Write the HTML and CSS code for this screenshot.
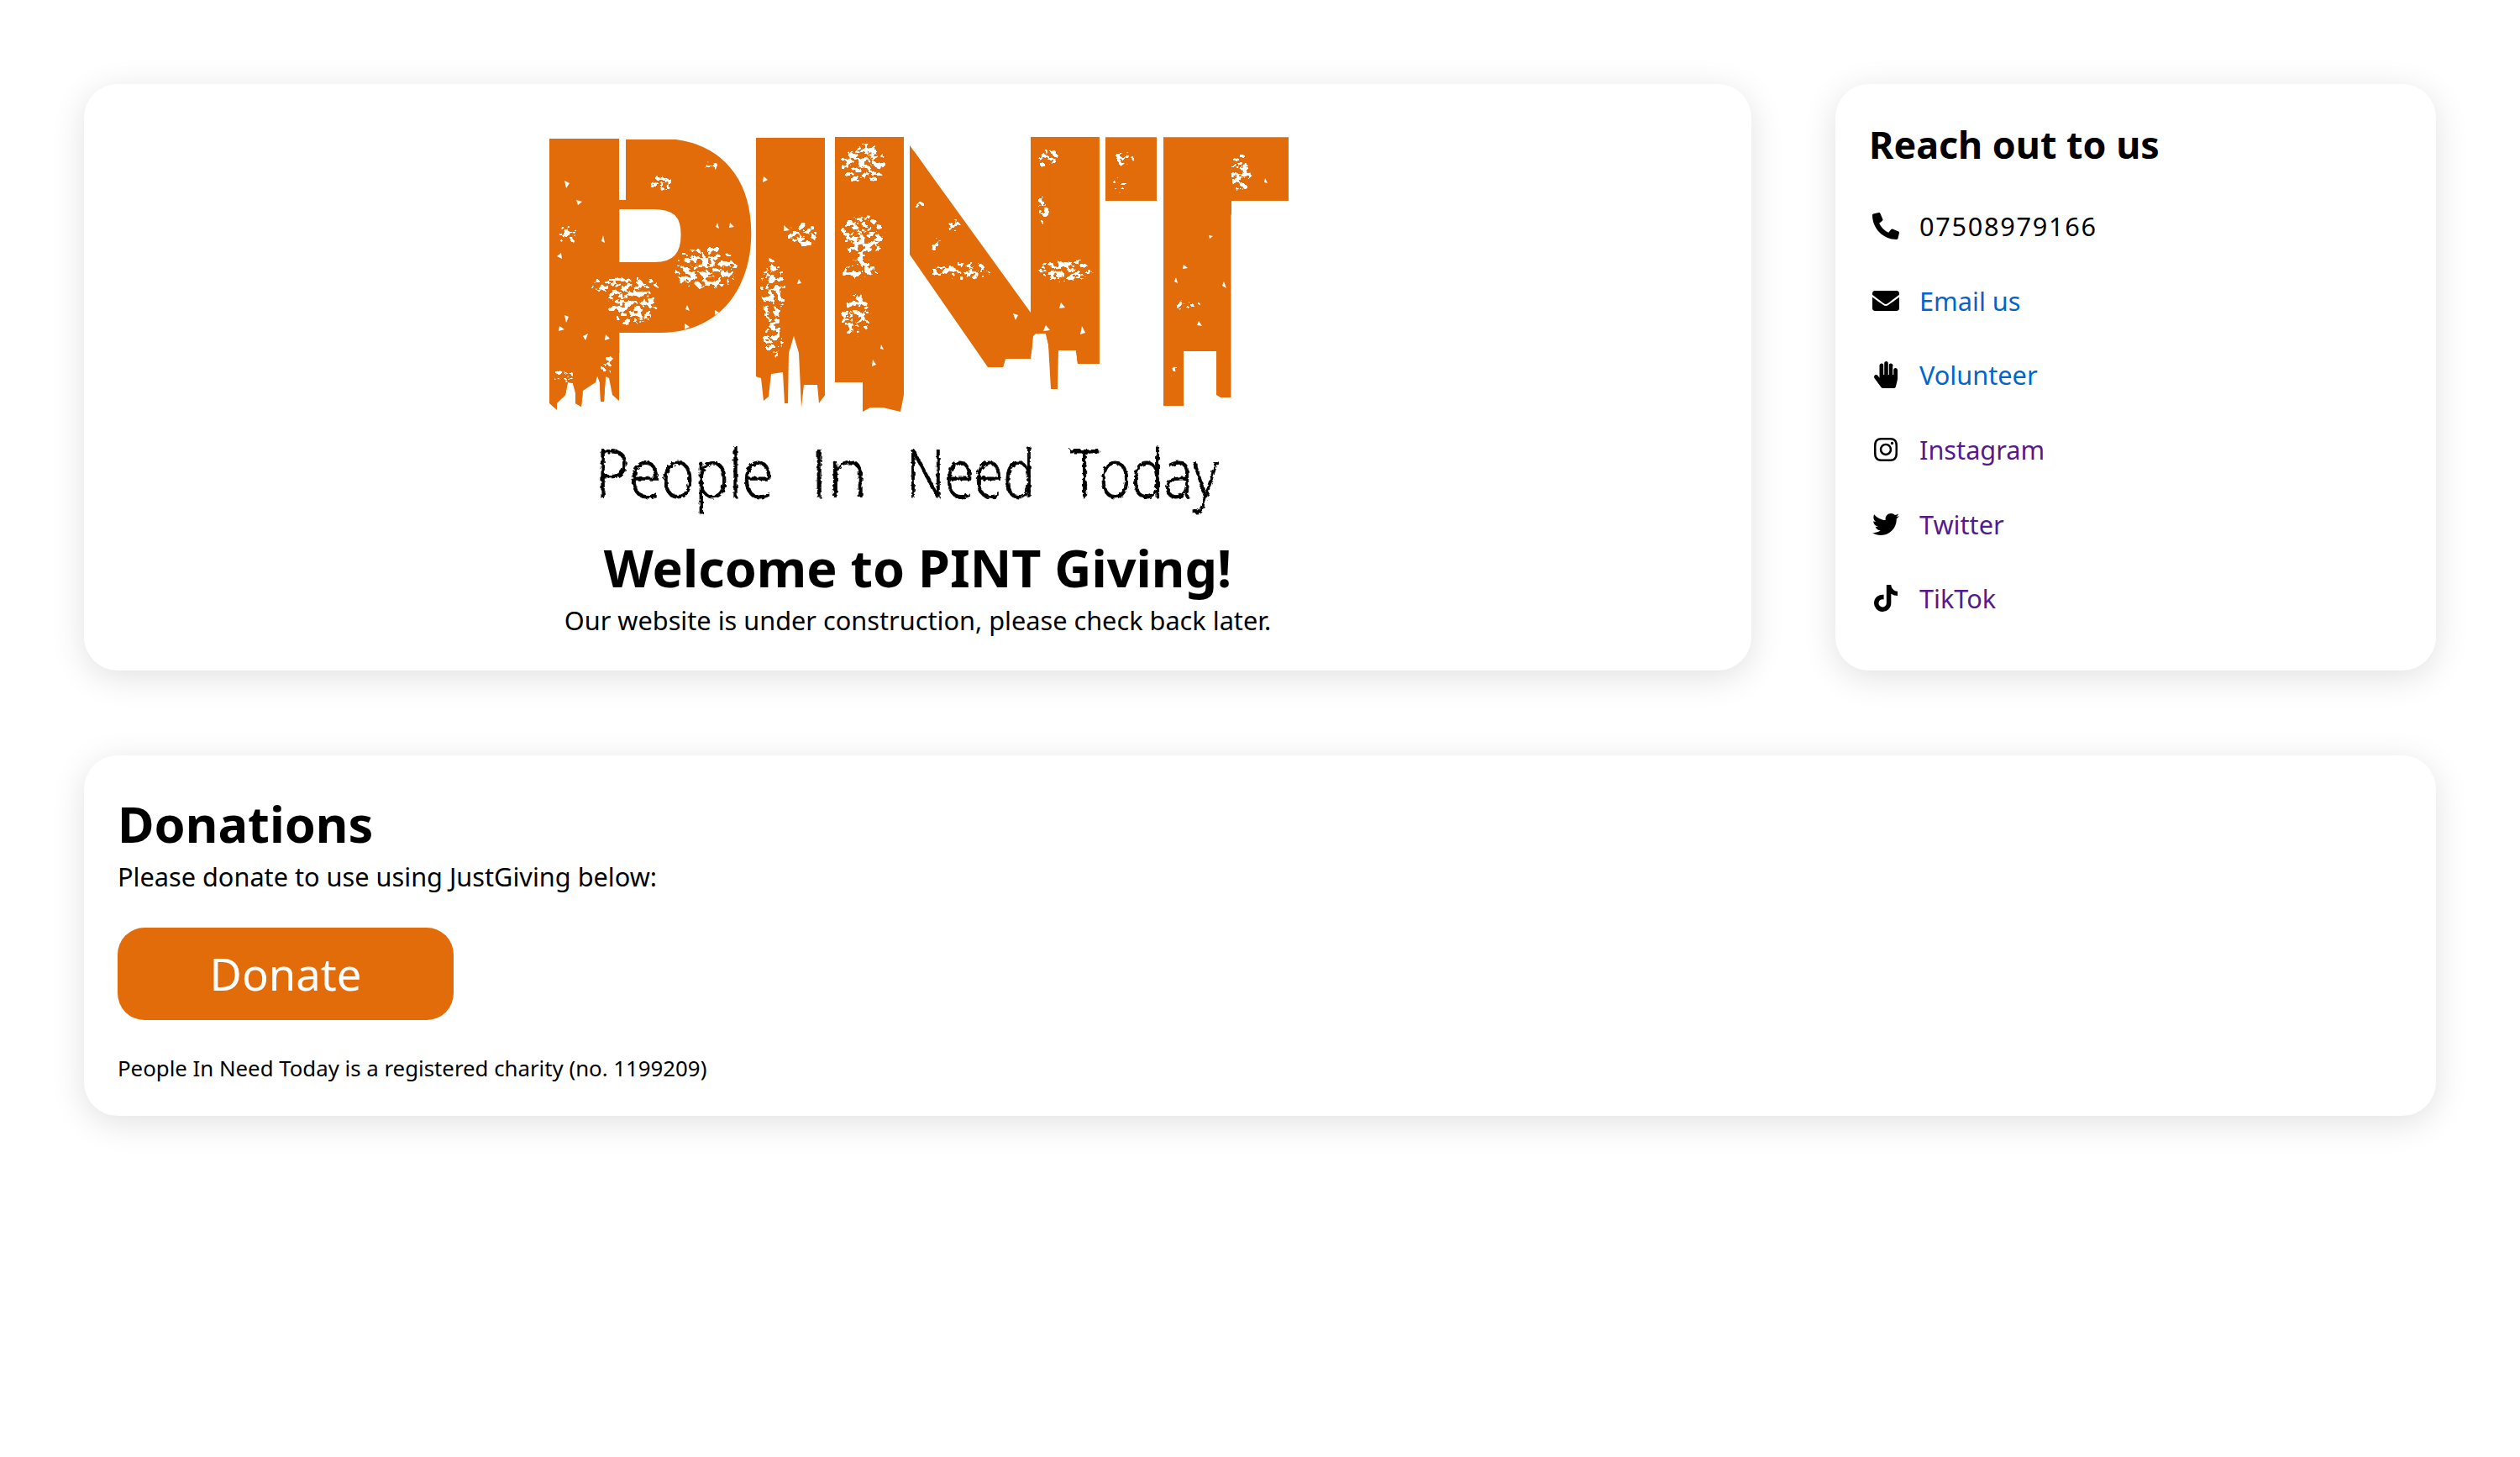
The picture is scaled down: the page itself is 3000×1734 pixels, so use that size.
FILE: index.html
```html
<!DOCTYPE html>
<html lang="en">
<head>
  <meta charset="UTF-8" />
  <title>PINT Giving</title>
  <link rel="stylesheet" href="styles.css">
</head>
<body>
  <div class="top-row">
    <section class="card welcome">
      <svg class="logo" viewBox="640 140 904 500" width="904" height="500" role="img" aria-label="PINT - People In Need Today">
        <defs>
          <clipPath id="clip-p">
            <polygon points="653,165 736,165 736,238 744,238 744,166 900,166 900,420 736,420 736,477 728,470 724,450 720,448 718,478 714,478 713,455 710,447 708,455 693,465 691,484 684,480 684,468 681,456 675,455 672,470 662,480 662,488 653,480" />
          </clipPath>
          <clipPath id="clip-i">
            <polygon points="899,164 981,164 981,470 974,480 972,458 956,458 953,485 950,420 944,400 938,420 937,480 933,480 931,443 917,445 914,472 908,477 905,450 899,448" />
          </clipPath>
          <clipPath id="clip-n">
            <polygon points="993,163 1075,163 1075,303 1082,303 1082,173 1226,372 1226,163 1308,163 1308,433 1282,433 1280,417 1259,417 1258,463 1250,463 1247,410 1244,397 1232,397 1229,400 1226,427 1196,427 1193,437 1175,437 1082,303 1075,303 1075,470 1071,490 1050,485 1035,485 1026,490 1026,455 993,455" />
          </clipPath>
          <clipPath id="clip-t">
            <polygon points="1315,163 1376,163 1376,239 1315,239" />
            <polygon points="1384,163 1533,163 1533,239 1465,239 1465,473 1452,473 1447,470 1447,418 1408,418 1408,483 1384,483" />
          </clipPath>
          <filter id="specks" x="0" y="0" width="1" height="1" color-interpolation-filters="sRGB">
            <feGaussianBlur in="SourceGraphic" stdDeviation="4" result="soft" />
            <feTurbulence type="fractalNoise" baseFrequency="0.14 0.17" numOctaves="3" seed="7" />
            <feColorMatrix values="0 0 0 0 1  0 0 0 0 1  0 0 0 0 1  1 0 0 0 0" result="noise" />
            <feComposite in="noise" in2="soft" operator="arithmetic" k1="1" />
            <feComponentTransfer>
              <feFuncA type="linear" slope="30" intercept="-15" />
            </feComponentTransfer>
            <feColorMatrix values="0 0 0 0 1  0 0 0 0 1  0 0 0 0 1  0 0 0 1 0" />
          </filter>
          <filter id="rough" x="-5%" y="-5%" width="110%" height="110%">
            <feTurbulence type="fractalNoise" baseFrequency="0.22" numOctaves="2" seed="3" />
            <feDisplacementMap in="SourceGraphic" scale="5" />
          </filter>
        </defs>

        <g clip-path="url(#clip-p)">
          <text class="pint" x="0" y="0" transform="translate(643 485) scale(3.72 4.4)" stroke-width="8">P</text>
        </g>
        <g clip-path="url(#clip-i)">
          <text class="pint" x="0" y="0" transform="translate(861 490) scale(5.69 4.74)">I</text>
        </g>
        <g clip-path="url(#clip-n)">
          <text class="pint" x="0" y="0" transform="translate(980 483) scale(4.72 4.4)" stroke-width="8">N</text>
        </g>
        <g clip-path="url(#clip-t)">
          <text class="pint" x="0" y="0" transform="translate(1326 475) scale(3.21 4.2)" stroke-width="10.8">T</text>
        </g>

        <g class="flecks" filter="url(#specks)">
          <ellipse cx="742" cy="340" rx="48" ry="14" />
          <ellipse cx="752" cy="365" rx="32" ry="27" />
          <ellipse cx="840" cy="320" rx="42" ry="30" />
          <ellipse cx="675" cy="280" rx="14" ry="16" />
          <ellipse cx="670" cy="448" rx="14" ry="12" />
          <ellipse cx="723" cy="435" rx="12" ry="14" />
          <ellipse cx="786" cy="218" rx="16" ry="14" />
          <ellipse cx="845" cy="198" rx="12" ry="12" />
          <ellipse cx="920" cy="345" rx="18" ry="44" />
          <ellipse cx="920" cy="405" rx="16" ry="24" />
          <ellipse cx="955" cy="280" rx="22" ry="18" />
          <ellipse cx="1027" cy="195" rx="30" ry="28" />
          <ellipse cx="1027" cy="280" rx="30" ry="28" />
          <ellipse cx="1023" cy="322" rx="26" ry="14" />
          <ellipse cx="1018" cy="375" rx="20" ry="30" />
          <ellipse cx="1145" cy="322" rx="42" ry="14" />
          <ellipse cx="1114" cy="290" rx="11" ry="12" />
          <ellipse cx="1135" cy="270" rx="12" ry="12" />
          <ellipse cx="1096" cy="244" rx="11" ry="9" />
          <ellipse cx="1268" cy="322" rx="38" ry="17" />
          <ellipse cx="1241" cy="249" rx="11" ry="21" />
          <ellipse cx="1248" cy="188" rx="18" ry="14" />
          <ellipse cx="1338" cy="188" rx="17" ry="12" />
          <ellipse cx="1332" cy="220" rx="11" ry="14" />
          <ellipse cx="1476" cy="206" rx="15" ry="28" />
          <ellipse cx="1412" cy="363" rx="22" ry="9" />
          <ellipse cx="1396" cy="444" rx="8" ry="15" />
        </g>
        <path class="flecks" d="M671 215l6 3-4 6zM685 238l7 2-5 4zM662 305l5-4 1 7zM717 280l2 9-4-2zM817 363l3 7-5-2zM850 369l5 3-5 3zM814 385l6 4-6 3zM868 265l5 5-6 1zM853 265l2 7-4-2zM908 210l5 4-6 3zM932 268l7 6-7 1zM950 332l3 5-5 1zM1244 387l5 6-8 1zM1287 388l4 8-6 2zM1262 360l5 6-7 1zM1205 373l6 2-3 6zM1408 315l5 4-6 1zM1426 382l4 6-6-1zM1399 330l2 7-4-2zM1456 335l3 8-5-3zM1438 280l5 1-4 3zM1505 212l3 6-4-1zM1038 428l4 6-5 2zM1048 410l3 6-4-1zM671 375l5 2-3 7zM665 388l6 4-7 2zM693 400l6-3-3 8zM720 398l5 5-6 2z" />

        <g class="tagline" filter="url(#rough)">
          <text x="708" y="592" textLength="212" lengthAdjust="spacingAndGlyphs">People</text>
          <text x="964" y="592" textLength="68" lengthAdjust="spacingAndGlyphs">In</text>
          <text x="1078" y="592" textLength="153" lengthAdjust="spacingAndGlyphs">Need</text>
          <text x="1273" y="592" textLength="176" lengthAdjust="spacingAndGlyphs">Today</text>
        </g>
      </svg>
      <h1>Welcome to PINT Giving!</h1>
      <p>Our website is under construction, please check back later.</p>
    </section>

    <aside class="card contact">
      <h2>Reach out to us</h2>
      <ul class="contact-list">
        <li>
          <svg class="icon" viewBox="0 0 512 512"><path d="M497.39 361.8l-112-48a24 24 0 0 0-28 6.9l-49.6 60.6A370.66 370.66 0 0 1 130.6 204.11l60.6-49.6a23.94 23.94 0 0 0 6.9-28l-48-112A24.16 24.16 0 0 0 122.6.61l-104 24A24 24 0 0 0 0 48c0 256.5 207.9 464 464 464a24 24 0 0 0 23.4-18.6l24-104a24.29 24.29 0 0 0-14.01-27.6z"/></svg>
          <span class="phone">07508979166</span>
        </li>
        <li>
          <svg class="icon" viewBox="0 0 512 512"><path d="M502.3 190.8c3.9-3.1 9.7-.2 9.7 4.7V400c0 26.5-21.5 48-48 48H48c-26.5 0-48-21.5-48-48V195.6c0-5 5.7-7.8 9.7-4.7 22.4 17.4 52.1 39.5 154.1 113.6 21.1 15.4 56.7 47.8 92.2 47.6 35.7.3 72-32.8 92.3-47.6 102-74.1 131.6-96.3 154-113.7zM256 320c23.2.4 56.6-29.2 73.4-41.4 132.7-96.3 142.8-104.7 173.4-128.7 5.8-4.5 9.2-11.5 9.2-18.9v-19c0-26.5-21.5-48-48-48H48C21.5 64 0 85.5 0 112v19c0 7.4 3.4 14.3 9.2 18.9 30.6 23.9 40.7 32.4 173.4 128.7 16.8 12.2 50.2 41.8 73.4 41.4z"/></svg>
          <a class="link" href="#">Email us</a>
        </li>
        <li>
          <svg class="icon" viewBox="0 0 448 512"><path d="M408.781 128.007C386.356 127.578 368 146.36 368 168.79V256h-8V79.79c0-22.43-18.356-41.212-40.781-40.783C297.488 39.423 280 57.169 280 79v177h-8V40.79C272 18.36 253.644-.422 231.219.007 209.488.423 192 18.169 192 40v216h-8V80.79c0-22.43-18.356-41.212-40.781-40.783C121.488 40.423 104 58.169 104 80v235.992l-31.648-43.519c-12.993-17.866-38.009-21.817-55.877-8.823-17.865 12.994-21.815 38.01-8.822 55.877l125.601 172.705A48 48 0 0 0 172.073 512h197.59c22.274 0 41.622-15.324 46.724-37.006l26.508-112.66a192.011 192.011 0 0 0 5.104-43.975V168c.001-21.831-17.487-39.577-39.218-39.993z"/><path class="icon-gap" d="M188 20V256M276 20V256M364 90V256"/></svg>
          <a class="link" href="#">Volunteer</a>
        </li>
        <li>
          <svg class="icon" viewBox="0 0 448 512"><path d="M224.1 141c-63.6 0-114.9 51.3-114.9 114.9s51.3 114.9 114.9 114.9S339 319.5 339 255.9 287.7 141 224.1 141zm0 189.6c-41.1 0-74.7-33.5-74.7-74.7s33.5-74.7 74.7-74.7 74.7 33.5 74.7 74.7-33.6 74.7-74.7 74.7zm146.4-194.3c0 14.9-12 26.8-26.8 26.8-14.9 0-26.8-12-26.8-26.8s12-26.8 26.8-26.8 26.8 12 26.8 26.8zm76.1 27.2c-1.7-35.9-9.9-67.7-36.2-93.9-26.2-26.2-58-34.4-93.9-36.2-37-2.1-147.9-2.1-184.9 0-35.8 1.7-67.6 9.9-93.9 36.1s-34.4 58-36.2 93.9c-2.1 37-2.1 147.9 0 184.9 1.7 35.9 9.9 67.7 36.2 93.9s58 34.4 93.9 36.2c37 2.1 147.9 2.1 184.9 0 35.9-1.7 67.7-9.9 93.9-36.2 26.2-26.2 34.4-58 36.2-93.9 2.1-37 2.1-147.8 0-184.8zM398.8 388c-7.8 19.6-22.9 34.7-42.6 42.6-29.5 11.7-99.5 9-132.1 9s-102.7 2.6-132.1-9c-19.6-7.8-34.7-22.9-42.6-42.6-11.7-29.5-9-99.5-9-132.1s-2.6-102.7 9-132.1c7.8-19.6 22.9-34.7 42.6-42.6 29.5-11.7 99.5-9 132.1-9s102.7-2.6 132.1 9c19.6 7.8 34.7 22.9 42.6 42.6 11.7 29.5 9 99.5 9 132.1s2.7 102.7-9 132.1z"/></svg>
          <a class="link visited" href="#">Instagram</a>
        </li>
        <li>
          <svg class="icon" viewBox="0 0 512 512"><path d="M459.37 151.716c.325 4.548.325 9.097.325 13.645 0 138.72-105.583 298.558-298.558 298.558-59.452 0-114.68-17.219-161.137-47.106 8.447.974 16.568 1.299 25.34 1.299 49.055 0 94.213-16.568 130.274-44.832-46.132-.975-84.792-31.188-98.112-72.772 6.498.974 12.995 1.624 19.818 1.624 9.421 0 18.843-1.3 27.614-3.573-48.081-9.747-84.143-51.98-84.143-102.985v-1.299c13.969 7.797 30.214 12.67 47.431 13.319-28.264-18.843-46.781-51.005-46.781-87.391 0-19.492 5.197-37.36 14.294-52.954 51.655 63.675 129.3 105.258 216.365 109.807-1.624-7.797-2.599-15.918-2.599-24.04 0-57.828 46.782-104.934 104.934-104.934 30.213 0 57.502 12.67 76.67 33.137 23.715-4.548 46.456-13.32 66.599-25.34-7.798 24.366-24.366 44.833-46.132 57.827 21.117-2.273 41.584-8.122 60.426-16.243-14.292 20.791-32.161 39.308-52.628 54.253z"/></svg>
          <a class="link visited" href="#">Twitter</a>
        </li>
        <li>
          <svg class="icon" viewBox="0 0 448 512"><path d="M448,209.91a210.06,210.06,0,0,1-122.77-39.25V349.38A162.55,162.55,0,1,1,185,188.31V278.2a74.62,74.62,0,1,0,52.23,71.18V0l88,0a121.18,121.18,0,0,0,1.86,22.17h0A122.18,122.18,0,0,0,381,102.39a121.43,121.43,0,0,0,67,20.14Z"/></svg>
          <a class="link visited" href="#">TikTok</a>
        </li>
      </ul>
    </aside>
  </div>

  <section class="card donations">
    <h1>Donations</h1>
    <p>Please donate to use using JustGiving below:</p>
    <a class="donate-btn" href="#">Donate</a>
    <p class="small">People In Need Today is a registered charity (no. 1199209)</p>
  </section>
</body>
</html>
```

FILE: styles.css
```css
* {
  box-sizing: border-box;
  margin: 0;
  padding: 0;
}
body {
  font-family: "Noto Sans", sans-serif;
  background-color: #fff;
  color: #000;
  padding: 100px;
  font-size: 30.7px;
}
.top-row {
  display: grid;
  grid-template-columns: 1985px 715px;
  gap: 100px;
  margin-bottom: 101px;
}
.card {
  background: #fff;
  border-radius: 40px;
  box-shadow: 0 8px 40px rgba(0,0,0,0.12);
  padding: 40px;
}
h1 {
  font-size: 61px;
  font-weight: 700;
  line-height: 72px;
}
h2 {
  font-size: 44.8px;
  font-weight: 700;
  line-height: 64px;
}
p {
  line-height: 42px;
}

/* welcome card */
.welcome {
  height: 698px;
  text-align: center;
}
.welcome p {
  margin-top: 5px;
}
.logo {
  display: block;
  margin: 0 auto;
}
.pint {
  font-family: "Liberation Sans", sans-serif;
  font-size: 100px;
  font-weight: 700;
  fill: #e36c0a;
  stroke: #e36c0a;
  stroke-linejoin: miter;
}
.flecks {
  fill: #fff;
}
.tagline {
  font-family: "Open Sans", sans-serif;
  font-size: 80px;
  font-weight: 300;
  fill: #000;
  stroke: #000;
  stroke-width: 1;
}

/* contact card */
.contact-list {
  list-style: none;
  margin-top: 21px;
}
.contact-list li {
  display: flex;
  align-items: center;
  gap: 20px;
  height: 88.6px;
}
.icon {
  width: 40px;
  height: 32px;
  flex-shrink: 0;
  fill: #000;
}
.icon-gap {
  fill: none;
  stroke: #fff;
  stroke-width: 14;
}
.phone {
  letter-spacing: 1.7px;
}
.link {
  color: #0066cc;
  text-decoration: none;
}
.link.visited {
  color: #551a8b;
}

/* donations card */
.donations {
  padding-bottom: 29px;
}
.donations h1 {
  font-size: 59.5px;
  padding-top: 5px;
}
.donations p {
  margin-top: 6px;
}
.donate-btn {
  display: block;
  width: 400px;
  height: 110px;
  margin: 40px 0 36px;
  border-radius: 32px;
  background-color: #e36c0a;
  color: #fff;
  font-size: 52.6px;
  line-height: 110px;
  text-align: center;
  text-decoration: none;
}
.donations .small {
  font-size: 25.8px;
  margin-top: 0;
  padding-bottom: 7px;
}
```
